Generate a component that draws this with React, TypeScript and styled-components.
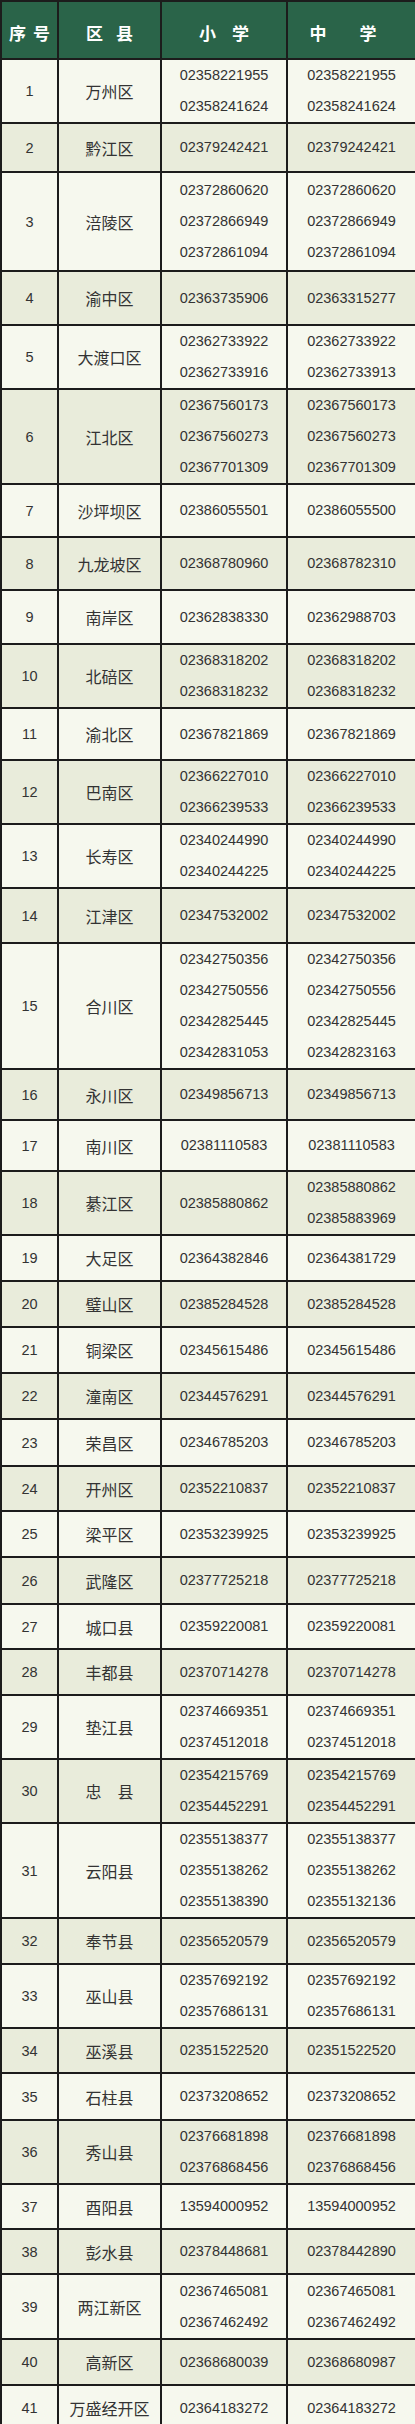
import React from 'react';
import styled, { createGlobalStyle } from 'styled-components';

const GlobalStyle = createGlobalStyle`
  body {
    margin: 0;
    background: #ffffff;
  }
`;

const Table = styled.table`
  width: 415px;
  border-collapse: collapse;
  table-layout: fixed;
  border: 2px solid #1c1c1c;
  font-family: "Noto Sans CJK SC", sans-serif;
  color: #333333;
`;

const HeadRow = styled.tr`
  background: #2a6449;
`;

const HeadCell = styled.th<{ $shift?: number }>`
  height: 52px;
  border: 2px solid #1c1c1c;
  padding: 4px ${p => p.$shift ?? 0}px 0 0;
  color: #ffffff;
  font-size: 17px;
  font-weight: 700;
  text-align: center;
  vertical-align: middle;
`;

const HeadLabel = styled.span<{ $gap: number }>`
  display: inline-flex;
  gap: ${p => p.$gap}px;
`;

const Row = styled.tr<{ $alt: boolean }>`
  background: ${p => (p.$alt ? '#e9ecdb' : '#f6f8ee')};
`;

// measured row pitch includes one 2px rule, so the cell box gets the rest
const Cell = styled.td<{ $h: number }>`
  height: ${p => p.$h - 2}px;
  border: 2px solid #1c1c1c;
  padding: 0;
  text-align: center;
  vertical-align: middle;
`;

const IndexCell = styled(Cell)`
  font-family: "Liberation Sans", Arial, sans-serif;
  font-size: 14.5px;
`;

const DistrictCell = styled(Cell)`
  font-size: 16px;
  white-space: nowrap;
`;

const PhoneCell = styled(Cell)`
  font-family: "Liberation Sans", Arial, sans-serif;
  font-size: 14.5px;
`;

const PhoneLine = styled.div`
  line-height: 31px;
`;

interface Office {
  district: string;
  primary: string[];
  middle: string[];
  h: number;
}

const same = (district: string, phones: string[], h: number): Office => ({
  district,
  primary: phones,
  middle: phones,
  h,
});

const offices: Office[] = [
  same('万州区', ['02358221955', '02358241624'], 63),
  same('黔江区', ['02379242421'], 49),
  same('涪陵区', ['02372860620', '02372866949', '02372861094'], 99),
  { district: '渝中区', primary: ['02363735906'], middle: ['02363315277'], h: 54 },
  { district: '大渡口区', primary: ['02362733922', '02362733916'], middle: ['02362733922', '02362733913'], h: 63 },
  same('江北区', ['02367560173', '02367560273', '02367701309'], 95),
  { district: '沙坪坝区', primary: ['02386055501'], middle: ['02386055500'], h: 53 },
  { district: '九龙坡区', primary: ['02368780960'], middle: ['02368782310'], h: 53 },
  { district: '南岸区', primary: ['02362838330'], middle: ['02362988703'], h: 54 },
  same('北碚区', ['02368318202', '02368318232'], 62),
  same('渝北区', ['02367821869'], 52),
  same('巴南区', ['02366227010', '02366239533'], 63),
  same('长寿区', ['02340244990', '02340244225'], 63),
  same('江津区', ['02347532002'], 55),
  {
    district: '合川区',
    primary: ['02342750356', '02342750556', '02342825445', '02342831053'],
    middle: ['02342750356', '02342750556', '02342825445', '02342823163'],
    h: 126,
  },
  same('永川区', ['02349856713'], 51),
  same('南川区', ['02381110583'], 51),
  { district: '綦江区', primary: ['02385880862'], middle: ['02385880862', '02385883969'], h: 62 },
  { district: '大足区', primary: ['02364382846'], middle: ['02364381729'], h: 46 },
  same('璧山区', ['02385284528'], 46),
  same('铜梁区', ['02345615486'], 46),
  same('潼南区', ['02344576291'], 46),
  same('荣昌区', ['02346785203'], 47),
  same('开州区', ['02352210837'], 45),
  same('梁平区', ['02353239925'], 46),
  same('武隆区', ['02377725218'], 47),
  same('城口县', ['02359220081'], 45),
  same('丰都县', ['02370714278'], 46),
  same('垫江县', ['02374669351', '02374512018'], 64),
  same('忠　县', ['02354215769', '02354452291'], 61),
  {
    district: '云阳县',
    primary: ['02355138377', '02355138262', '02355138390'],
    middle: ['02355138377', '02355138262', '02355132136'],
    h: 95,
  },
  same('奉节县', ['02356520579'], 46),
  same('巫山县', ['02357692192', '02357686131'], 63),
  same('巫溪县', ['02351522520'], 45),
  same('石柱县', ['02373208652'], 47),
  same('秀山县', ['02376681898', '02376868456'], 63),
  same('酉阳县', ['13594000952'], 45),
  { district: '彭水县', primary: ['02378448681'], middle: ['02378442890'], h: 45 },
  same('两江新区', ['02367465081', '02367462492'], 65),
  { district: '高新区', primary: ['02368680039'], middle: ['02368680987'], h: 46 },
  same('万盛经开区', ['02364183272'], 46),
];

const headers = [
  { chars: ['序', '号'], gap: 7 },
  { chars: ['区', '县'], gap: 13 },
  { chars: ['小', '学'], gap: 16 },
  { chars: ['中', '学'], gap: 33, shift: 17 },
];

const App: React.FC = () => {
  return (
    <>
      <GlobalStyle />
      <Table>
        <colgroup>
          <col style={{ width: 57 }} />
          <col style={{ width: 103 }} />
          <col style={{ width: 126 }} />
          <col style={{ width: 129 }} />
        </colgroup>
        <thead>
          <HeadRow>
            {headers.map(head => (
              <HeadCell key={head.chars.join('')} $shift={head.shift}>
                <HeadLabel $gap={head.gap}>
                  {head.chars.map(c => (
                    <span key={c}>{c}</span>
                  ))}
                </HeadLabel>
              </HeadCell>
            ))}
          </HeadRow>
        </thead>
        <tbody>
          {offices.map((office, i) => (
            <Row key={office.district} $alt={i % 2 === 1}>
              <IndexCell $h={office.h}>{i + 1}</IndexCell>
              <DistrictCell $h={office.h}>{office.district}</DistrictCell>
              <PhoneCell $h={office.h}>
                {office.primary.map(p => (
                  <PhoneLine key={p}>{p}</PhoneLine>
                ))}
              </PhoneCell>
              <PhoneCell $h={office.h}>
                {office.middle.map(p => (
                  <PhoneLine key={p}>{p}</PhoneLine>
                ))}
              </PhoneCell>
            </Row>
          ))}
        </tbody>
      </Table>
    </>
  );
};

export default App;
